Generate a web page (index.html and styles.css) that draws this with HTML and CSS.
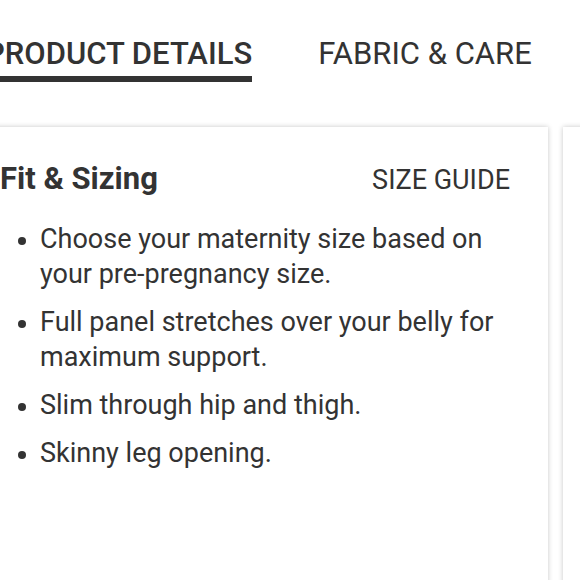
FILE: index.html
```html
<!DOCTYPE html>
<html lang="en">
<head>
<meta charset="utf-8">
<title>Product details</title>
<link rel="stylesheet" href="styles.css">
</head>
<body>
<div class="page">
  <nav class="tabs">
    <div class="tab active">PRODUCT DETAILS</div>
    <div class="tab">FABRIC &amp; CARE</div>
  </nav>
  <div class="cards">
    <section class="card">
      <div class="card-head">
        <h2 class="card-title">Fit &amp; Sizing</h2>
        <span class="size-guide">SIZE GUIDE</span>
      </div>
      <ul class="bullets">
        <li>Choose your maternity size based on your pre-pregnancy size.</li>
        <li>Full panel stretches over your belly for maximum support.</li>
        <li>Slim through hip and thigh.</li>
        <li>Skinny leg opening.</li>
      </ul>
    </section>
    <section class="card next"></section>
  </div>
</div>
</body>
</html>
```
FILE: styles.css
```css
html, body {
  margin: 0;
  padding: 0;
  background: #ffffff;
}
body {
  font-family: Roboto, "Liberation Sans", sans-serif;
  color: #333333;
  width: 580px;
  height: 580px;
  overflow: hidden;
}
.page {
  display: flex;
  flex-direction: column;
}
.tabs {
  display: flex;
  gap: 66px;
  margin-left: -15px;
  padding-top: 35px;
  height: 94px;
  box-sizing: border-box;
}
.tab {
  font-size: 31px;
  line-height: 38px;
  height: 47px;
  box-sizing: border-box;
  white-space: nowrap;
}
.tab.active {
  font-weight: 500;
  border-bottom: 6px solid #333333;
}
.cards {
  display: flex;
  gap: 15px;
  margin-top: 33px;
  margin-left: -38px;
}
.card {
  flex: 0 0 586px;
  height: 500px;
  box-sizing: border-box;
  padding: 34px 38px 0 38px;
  background: #ffffff;
  box-shadow: 0 0 5px rgba(0, 0, 0, 0.22);
}
.card.next {
  flex: 0 0 300px;
  padding: 0;
}
.card-head {
  display: flex;
  justify-content: space-between;
  align-items: baseline;
}
.card-title {
  margin: 0;
  font-size: 31px;
  font-weight: 700;
  line-height: 36px;
}
.size-guide {
  font-size: 27px;
  line-height: 36px;
}
.bullets {
  list-style: none;
  margin: 24px 0 0 0;
  padding: 0;
}
.bullets li {
  display: flex;
  font-size: 27px;
  line-height: 35px;
  margin-bottom: 13px;
}
.bullets li::before {
  content: "";
  flex: 0 0 8px;
  height: 8px;
  border-radius: 50%;
  background: #333333;
  margin: 15px 14px 0 18px;
}
```
